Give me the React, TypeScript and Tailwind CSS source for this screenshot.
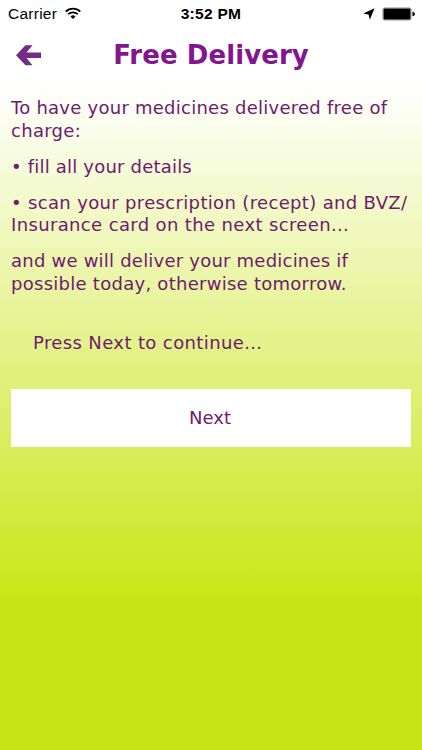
const paragraphs = [
  [
    ["To have your medicines delivered free of", "tracking-[0.25px]"],
    ["charge:", "tracking-[0.3px]"]
  ],
  [["• fill all your details", "tracking-[0.2px]"]],
  [
    ["• scan your prescription (recept) and BVZ/", "tracking-[0.34px]"],
    ["Insurance card on the next screen...", "tracking-[0.36px]"]
  ],
  [
    ["and we will deliver your medicines if", "tracking-[0.22px]"],
    ["possible today, otherwise tomorrow.", "tracking-[0.27px]"]
  ]
];

export default function App() {
  return (
    <main className="flex h-[750px] w-full flex-col bg-[linear-gradient(to_bottom,#ffffff_0px,#ffffff_85px,#c8e617_600px)] font-['DejaVu_Sans',sans-serif] text-[#6f1a6e]">
      <header className="grid h-7 grid-cols-3 items-center px-2 font-['Liberation_Sans',sans-serif] text-[15.5px] text-black">
        <div className="flex items-center gap-2">
          <span className="tracking-[0.25px]">Carrier</span>
          <svg className="-mt-0.5 h-3 w-4" viewBox="0 0 16 12" fill="none" stroke="currentColor" strokeWidth="1.8">
            <path d="M.7 4.6a10.6 10.6 0 0 1 14.6 0M3.2 7.2a7 7 0 0 1 9.6 0" />
            <path d="M5.5 9.4a3.6 3.6 0 0 1 5 0L8 12z" fill="currentColor" stroke="none" />
          </svg>
        </div>
        <span className="text-center font-bold tracking-[0.3px]">3:52 PM</span>
        <div className="-mr-[1px] flex items-center justify-end gap-[7px]">
          <svg className="size-3" viewBox="0 0 12 12" fill="currentColor">
            <path d="M11.5.3 6.8 11.7 5.6 6.4.3 5.6z" />
          </svg>
          <svg className="h-[14px] w-[33px]" viewBox="0 0 33 14">
            <rect x="0.5" y="0.5" width="29" height="13" rx="2.5" fill="#8b8b8b" />
            <rect x="1.8" y="1.8" width="26.4" height="10.4" rx="1" fill="currentColor" />
            <path d="M30.5 4.8q2.5 .4 2.5 2.2t-2.5 2.2z" fill="currentColor" />
          </svg>
        </div>
      </header>

      <div className="grid h-[54px] grid-cols-[56px_1fr_56px] items-center">
        <svg className="ml-[15px] h-[22px] w-[27px]" viewBox="0 0 27 22" fill="#722c87">
          <path d="M1 11.3 10.5 1.3H17.5L11.5 8.6H26V14H11.5L17.5 21.3H10.5z" />
        </svg>
        <h1 className="text-center text-[26px] font-bold tracking-[0.08px] text-[#84158f]">Free Delivery</h1>
      </div>

      <section className="flex flex-col gap-[13.5px] px-[11px] pt-[15px] text-[18px] leading-[22.6px] whitespace-nowrap">
        {paragraphs.map((lines) => (
          <p key={lines[0][0]}>
            {lines.map(([text, tracking]) => (
              <span key={text} className={`block ${tracking}`}>
                {text}
              </span>
            ))}
          </p>
        ))}
        <p className="mt-[22.4px] pl-[22px] tracking-[0.38px]">Press Next to continue...</p>
        <button className="mt-[21px] h-[58px] bg-white pt-[2px] pr-[2px]">Next</button>
      </section>
    </main>
  );
}
